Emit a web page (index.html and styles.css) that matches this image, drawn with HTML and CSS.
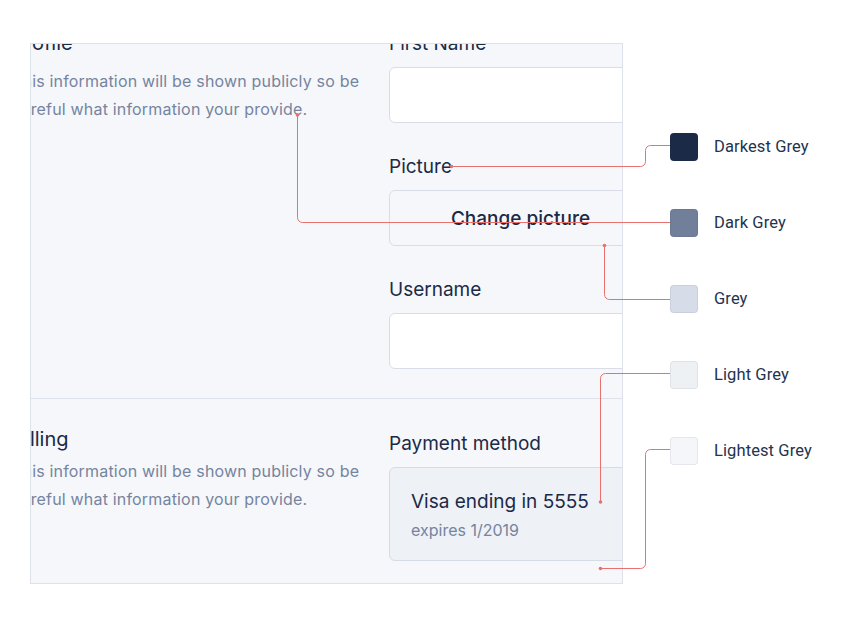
FILE: index.html
```html
<!DOCTYPE html>
<html lang="en">
<head>
<meta charset="UTF-8">
<meta name="viewport" content="width=device-width, initial-scale=1.0">
<title>Greys</title>
<link rel="stylesheet" href="styles.css">
</head>
<body>
<div class="board">
  <div class="frame">
    <form class="settings">
      <section class="group group-profile">
        <div class="group-info">
          <h2>Profile</h2>
          <p>This information will be shown publicly so be careful what information your provide.</p>
        </div>
        <div class="group-fields">
          <div class="field">
            <label for="firstName">First Name</label>
            <input type="text" id="firstName" class="input">
          </div>
          <div class="field">
            <label>Picture</label>
            <button type="button" class="btn-picture">Change picture</button>
          </div>
          <div class="field">
            <label for="username">Username</label>
            <input type="text" id="username" class="input">
          </div>
        </div>
      </section>
      <section class="group group-billing">
        <div class="group-info">
          <h2>Billing</h2>
          <p>This information will be shown publicly so be careful what information your provide.</p>
        </div>
        <div class="group-fields">
          <div class="field">
            <label>Payment method</label>
            <div class="card">
              <div class="card-name">Visa ending in 5555</div>
              <div class="card-expiry">expires 1/2019</div>
            </div>
          </div>
        </div>
      </section>
    </form>
  </div>

  <ul class="palette">
    <li><span class="swatch swatch-darkest"></span>Darkest Grey</li>
    <li><span class="swatch swatch-dark"></span>Dark Grey</li>
    <li><span class="swatch swatch-grey"></span>Grey</li>
    <li><span class="swatch swatch-light"></span>Light Grey</li>
    <li><span class="swatch swatch-lightest"></span>Lightest Grey</li>
  </ul>

  <!-- leader lines from each swatch to where the colour is used -->
  <svg class="leaders" width="866" height="619" viewBox="0 0 866 619">
    <path d="M451.5 166.5 H640.5 A5 5 0 0 0 645.5 161.5 V150.5 A5 5 0 0 1 650.5 145.5 H670"/>
    <path d="M297.5 115 V217.5 A5 5 0 0 0 302.5 222.5 H670"/>
    <path d="M604.5 245.5 V294.5 A5 5 0 0 0 609.5 299.5 H670"/>
    <path d="M670 373.5 H605.5 A5 5 0 0 0 600.5 378.5 V502"/>
    <path d="M670 449.5 H650.5 A5 5 0 0 0 645.5 454.5 V563.5 A5 5 0 0 1 640.5 568.5 H600.5"/>
    <circle cx="451.5" cy="166.5" r="1.8"/>
    <circle cx="297.5" cy="115" r="1.8"/>
    <circle cx="604.5" cy="245.5" r="1.8"/>
    <circle cx="600.5" cy="502" r="1.8"/>
    <circle cx="600.5" cy="568.5" r="1.8"/>
  </svg>
</div>
</body>
</html>
```

FILE: styles.css
```css
*,
*:before,
*:after{
  box-sizing: border-box;
}
body{
  background-color: #ffffff;
  font-family: 'Inter', 'Noto Sans', sans-serif;
  margin: 0;
  padding: 0;
}
.board {
  position: relative;
  width: 866px;
  height: 619px;
  display: flex;
  align-items: flex-start;
  padding: 43px 0 0 30px;
  overflow: hidden;
}

/* cropped window onto the settings form */
.frame {
  flex: none;
  width: 593px;
  height: 541px;
  background-color: #f5f7fa;
  border: 1px solid #dde2ea;
  overflow: hidden;
}
.settings {
  width: 640px;
  margin: -44px 0 0 -19px;
}
.group {
  display: grid;
  grid-template-columns: 360px 263px;
  column-gap: 17px;
  align-items: start;
}
.group-profile {
  padding: 31px 0 29px;
  border-bottom: 1px solid #dde2ea;
}
.group-billing {
  padding: 32px 0 40px;
}
.group-info h2 {
  margin: 0;
  font-size: 20px;
  line-height: 24px;
  font-weight: 400;
  color: #1b2a47;
}
.group-info p {
  margin: 12px 0 0;
  font-size: 16px;
  line-height: 28px;
  letter-spacing: 0.18px;
  color: #76849f;
}
.group-billing .group-info {
  margin-top: -4px;
}
.group-billing .group-info p {
  margin-top: 6px;
}
.group-fields {
  display: flex;
  flex-direction: column;
  gap: 31px;
}
.field label {
  display: block;
  font-size: 19px;
  line-height: 26px;
  color: #1b2a47;
  margin-bottom: 10px;
}
.input {
  display: block;
  width: 100%;
  height: 56px;
  background-color: #ffffff;
  border: 1px solid #d8dde7;
  border-radius: 6px;
  font-family: inherit;
  font-size: 18px;
  padding: 0 16px;
}
.btn-picture {
  display: block;
  width: 100%;
  height: 56px;
  background-color: #f6f7fa;
  border: 1px solid #d8dde7;
  border-radius: 6px;
  font-family: inherit;
  font-size: 19px;
  font-weight: 500;
  color: #1b2a47;
  cursor: pointer;
}
.card {
  height: 94px;
  background-color: #eef1f5;
  border: 1px solid #d6dce6;
  border-radius: 6px;
  padding: 22px 21px 17px;
}
.card-name {
  font-size: 19px;
  line-height: 24px;
  color: #1b2a47;
}
.card-expiry {
  margin-top: 4px;
  font-size: 16px;
  line-height: 24px;
  color: #76849f;
}

/* colour legend */
.palette {
  list-style: none;
  margin: 90px 0 0 47px;
  padding: 0;
  display: flex;
  flex-direction: column;
  gap: 48px;
}
.palette li {
  display: flex;
  align-items: center;
  height: 28px;
  padding-bottom: 2px;
  font-family: 'Roboto', sans-serif;
  font-size: 16.5px;
  letter-spacing: 0.1px;
  color: #24334f;
}
.swatch {
  flex: none;
  align-self: flex-start;
  width: 28px;
  height: 28px;
  margin-right: 16px;
  border-radius: 4px;
  border: 1px solid rgba(27, 42, 71, 0.07);
}
.swatch-darkest {
  background-color: #1b2a47;
}
.swatch-dark {
  background-color: #717f9b;
}
.swatch-grey {
  background-color: #d7dde8;
}
.swatch-light {
  background-color: #eef1f4;
}
.swatch-lightest {
  background-color: #f5f6f9;
}

.leaders {
  position: absolute;
  top: 0;
  left: 0;
  pointer-events: none;
}
.leaders path {
  fill: none;
  stroke: #e8716d;
  stroke-width: 1;
}
.leaders circle {
  fill: #e8716d;
}
```
